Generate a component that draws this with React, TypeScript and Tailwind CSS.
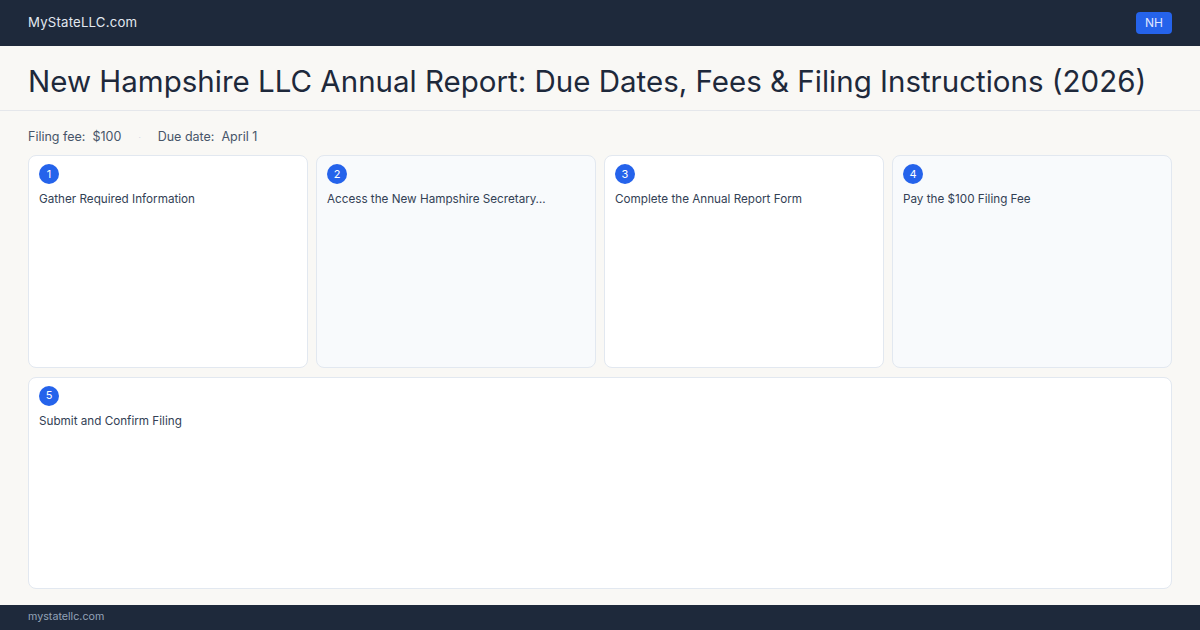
import React from 'react';

const steps = [
  { n: 1, title: 'Gather Required Information', shade: false },
  { n: 2, title: 'Access the New Hampshire Secretary…', shade: true },
  { n: 3, title: 'Complete the Annual Report Form', shade: false },
  { n: 4, title: 'Pay the $100 Filing Fee', shade: true },
];

function StepCard({ n, title, shade, wide }: { n: number; title: string; shade?: boolean; wide?: boolean }) {
  return (
    <div
      className={`${shade ? 'bg-[#f8fafc]' : 'bg-white'} ${wide ? 'col-span-4' : ''} border border-[#e2e8f0] rounded-lg px-[10px] pt-[8px] flex flex-col gap-[7px]`}
    >
      <div className="w-[20px] h-[20px] rounded-full bg-[#2563eb] text-white text-[11px] flex items-center justify-center leading-none">
        {n}
      </div>
      <div className="text-[11.7px] text-[#334155] leading-[16px]">{title}</div>
    </div>
  );
}

export default function App() {
  return (
    <div className="w-[1200px] h-[630px] flex flex-col bg-[#f9f8f5] font-['Inter',sans-serif] overflow-hidden">
      <header className="h-[46px] bg-[#1e293b] flex items-center justify-between px-7 shrink-0">
        <span className="text-[#e2e8f0] text-[13.2px] tracking-[0.2px]">MyStateLLC.com</span>
        <span className="bg-[#2563eb] text-[#e0e7ff] text-[12px] rounded px-[9px] h-[22px] flex items-center">NH</span>
      </header>

      <div className="h-[65px] border-b border-[#e5e7eb] flex items-center px-7 pt-[7px] shrink-0">
        <h1 className="text-[29.5px] text-[#1e293b] leading-none whitespace-nowrap">
          New Hampshire LLC Annual Report: Due Dates, Fees &amp; Filing Instructions (2026)
        </h1>
      </div>

      <main className="flex-1 flex flex-col px-7 pt-[18px] pb-[16px] gap-[10px] min-h-0">
        <div className="flex items-center text-[12.5px] text-[#475569] gap-[17px] leading-[16px]">
          <span>Filing fee:&nbsp; $100</span>
          <span className="text-[#cbd5e1] text-[8px]">·</span>
          <span>Due date:&nbsp; April 1</span>
        </div>
        <div className="flex-1 grid grid-cols-4 grid-rows-2 gap-[9px] gap-x-[8px] min-h-0">
          {steps.map((s) => (
            <StepCard key={s.n} n={s.n} title={s.title} shade={s.shade} />
          ))}
          <StepCard n={5} title="Submit and Confirm Filing" wide />
        </div>
      </main>

      <footer className="h-[25px] bg-[#1e293b] flex items-center px-7 shrink-0">
        <span className="text-[#94a3b8] text-[10.7px]">mystatellc.com</span>
      </footer>
    </div>
  );
}
